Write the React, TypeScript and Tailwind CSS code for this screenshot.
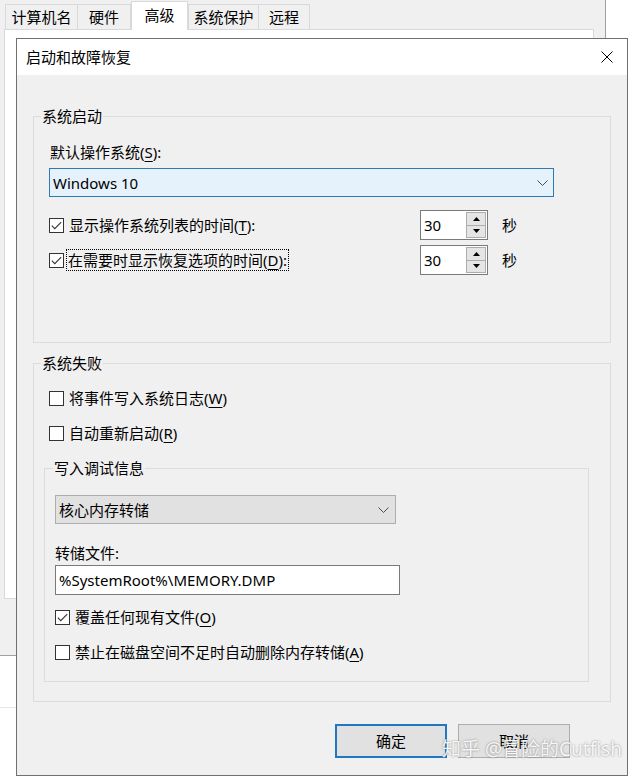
import React from 'react'

type Children = { children: React.ReactNode }

function Key({ children }: Children) {
  return <span className="underline decoration-1 underline-offset-[3px]">{children}</span>
}

function CheckBox({ checked }: { checked?: boolean }) {
  return (
    <span className="flex h-[15px] w-[15px] shrink-0 items-center justify-center border border-[#333333] bg-white">
      {checked && (
        <svg width="11" height="9" viewBox="0 0 11 9" fill="none">
          <path d="M0.8 4.6L3.8 7.6L10.2 1.2" stroke="#333333" strokeWidth="1.1" />
        </svg>
      )}
    </span>
  )
}

function CheckRow({ checked, focus, children }: { checked?: boolean; focus?: boolean; children: React.ReactNode }) {
  return (
    <div className="flex h-5 items-center">
      <CheckBox checked={checked} />
      {focus ? (
        <span className="ml-[3px] px-[1px] outline-1 outline-dotted outline-black">{children}</span>
      ) : (
        <span className="ml-[5px]">{children}</span>
      )}
    </div>
  )
}

function Chevron() {
  return (
    <svg width="11" height="6" viewBox="0 0 11 6" fill="none">
      <path d="M0.5 0.5L5.5 5.5L10.5 0.5" stroke="#4d4d4d" strokeWidth="1" />
    </svg>
  )
}

function SpinArrow({ up }: { up?: boolean }) {
  return (
    <svg width="7" height="4" viewBox="0 0 7 4">
      {up ? <path d="M0 4L3.5 0L7 4Z" fill="#000" /> : <path d="M0 0L3.5 4L7 0Z" fill="#000" />}
    </svg>
  )
}

function Spinner({ value }: { value: string }) {
  return (
    <div className="flex h-[30px] w-[68px] border border-[#7a7a7a] bg-white">
      <span className="flex-1 pl-[3px] leading-[28px]">{value}</span>
      <div className="flex w-[21px] flex-col py-px pr-px">
        <div className="flex flex-1 items-center justify-center border border-[#adadad] bg-[#e5e5e5]">
          <SpinArrow up />
        </div>
        <div className="flex flex-1 items-center justify-center border border-t-0 border-[#adadad] bg-[#e5e5e5]">
          <SpinArrow />
        </div>
      </div>
    </div>
  )
}

function Tab({ label, width, active }: { label: string; width: string; active?: boolean }) {
  if (active) {
    return (
      <div className={`relative z-10 -mb-px flex h-[29px] items-start justify-center border-x border-t border-[#d9d9d9] bg-white pt-[3px] ${width}`}>
        {label}
      </div>
    )
  }
  return (
    <div className={`flex h-[25px] items-center justify-center border-t border-l border-[#d9d9d9] ${width}`}>
      {label}
    </div>
  )
}

export default function App() {
  return (
    <div className="relative h-[776px] w-[634px] overflow-hidden bg-white font-['Noto_Sans','Noto_Sans_CJK_SC',sans-serif] text-[15px] leading-5 text-black">
      {/* background: system properties window */}
      <div className="absolute left-0 top-0 flex h-[656px] w-[606px] flex-col border-r border-b border-[#a0a0a0] bg-[#f0f0f0]">
        <div className="flex h-[29px] items-end pl-[5px]">
          <Tab label="计算机名" width="w-[72px]" />
          <Tab label="硬件" width="w-[53px]" />
          <div className="h-[25px] w-px bg-[#d9d9d9]" />
          <Tab label="高级" width="w-[57px]" active />
          <Tab label="系统保护" width="w-[70px]" />
          <div className="flex h-[25px] w-[52px] items-center justify-center border-x border-t border-[#d9d9d9]">远程</div>
        </div>
        <div className="ml-[4px] mr-[11px] h-[570px] border border-[#d9d9d9] bg-white" />
      </div>
      <div className="absolute left-0 top-[707px] h-px w-[16px] bg-[#e6e6e6]" />

      {/* dialog */}
      <div className="absolute left-[16px] top-[38px] flex h-[738px] w-[612px] flex-col border border-[#707070] bg-[#f0f0f0]">
        <div className="flex h-[36px] shrink-0 items-center justify-between bg-white pl-[9px] pr-[14px]">
          <span>启动和故障恢复</span>
          <svg width="12" height="12" viewBox="0 0 12 12" fill="none">
            <path d="M0.5 0.5L11.5 11.5M11.5 0.5L0.5 11.5" stroke="#000" strokeWidth="1" />
          </svg>
        </div>

        <div className="flex flex-1 flex-col px-4">
          <fieldset className="mt-[31px] border border-[#dcdcdc] p-0">
            <legend className="ml-[7px] px-px leading-5">系统启动</legend>
            <div className="px-[15px] pb-[67px]">
              <div className="mt-4 ml-px">
                默认操作系统(<Key>S</Key>):
              </div>
              <div className="mt-[6px] flex h-[29px] w-[505px] items-center justify-between border border-[#2d7bb5] bg-[#e5f1fb] pl-[3px] pr-[5px]">
                <span>Windows 10</span>
                <Chevron />
              </div>
              <div className="mt-[13px] flex h-[30px] items-center">
                <div className="w-[371px]">
                  <CheckRow checked>
                    显示操作系统列表的时间(<Key>T</Key>):
                  </CheckRow>
                </div>
                <Spinner value="30" />
                <span className="ml-[14px]">秒</span>
              </div>
              <div className="mt-[5px] flex h-[30px] items-center">
                <div className="w-[371px]">
                  <CheckRow checked focus>
                    在需要时显示恢复选项的时间(<Key>D</Key>):
                  </CheckRow>
                </div>
                <Spinner value="30" />
                <span className="ml-[14px]">秒</span>
              </div>
            </div>
          </fieldset>

          <fieldset className="mt-[10px] border border-[#dcdcdc] p-0">
            <legend className="ml-[7px] px-px leading-5">系统失败</legend>
            <div className="px-[10px] pb-[19px]">
              <div className="mt-[15px] ml-[5px]">
                <CheckRow>
                  将事件写入系统日志(<Key>W</Key>)
                </CheckRow>
              </div>
              <div className="mt-[15px] ml-[5px]">
                <CheckRow>
                  自动重新启动(<Key>R</Key>)
                </CheckRow>
              </div>

              <fieldset className="mt-[15px] w-[545px] border border-[#dcdcdc] p-0">
                <legend className="ml-2 px-px leading-5">写入调试信息</legend>
                <div className="px-[10px] pb-[19px]">
                  <div className="mt-[17px] flex h-[29px] w-[341px] items-center justify-between border border-[#adadad] bg-[#e1e1e1] pl-[3px] pr-[6px]">
                    <span>核心内存转储</span>
                    <Chevron />
                  </div>
                  <div className="mt-[19px]">转储文件:</div>
                  <div className="mt-[2px] flex h-[30px] w-[345px] items-center border border-[#7a7a7a] bg-white pl-[3px]">
                    %SystemRoot%\MEMORY.DMP
                  </div>
                  <div className="mt-[12px]">
                    <CheckRow checked>
                      覆盖任何现有文件(<Key>O</Key>)
                    </CheckRow>
                  </div>
                  <div className="mt-[15px]">
                    <CheckRow>
                      禁止在磁盘空间不足时自动删除内存转储(<Key>A</Key>)
                    </CheckRow>
                  </div>
                </div>
              </fieldset>
            </div>
          </fieldset>

          <div className="mt-[22px] flex justify-end gap-[11px] pr-[41px]">
            <button className="h-[34px] w-[112px] border-2 border-[#1f78c1] bg-[#e1e1e1]">确定</button>
            <button className="h-[34px] w-[112px] border border-[#adadad] bg-[#e1e1e1]">取消</button>
          </div>
        </div>
      </div>

      {/* watermark */}
      <div className="absolute left-[442px] top-[737px] whitespace-nowrap text-[19px] leading-6 text-white/90 [text-shadow:0_0_2px_rgba(80,80,80,0.7)]">
        知乎 @冒险的Cutfish
      </div>
    </div>
  )
}
